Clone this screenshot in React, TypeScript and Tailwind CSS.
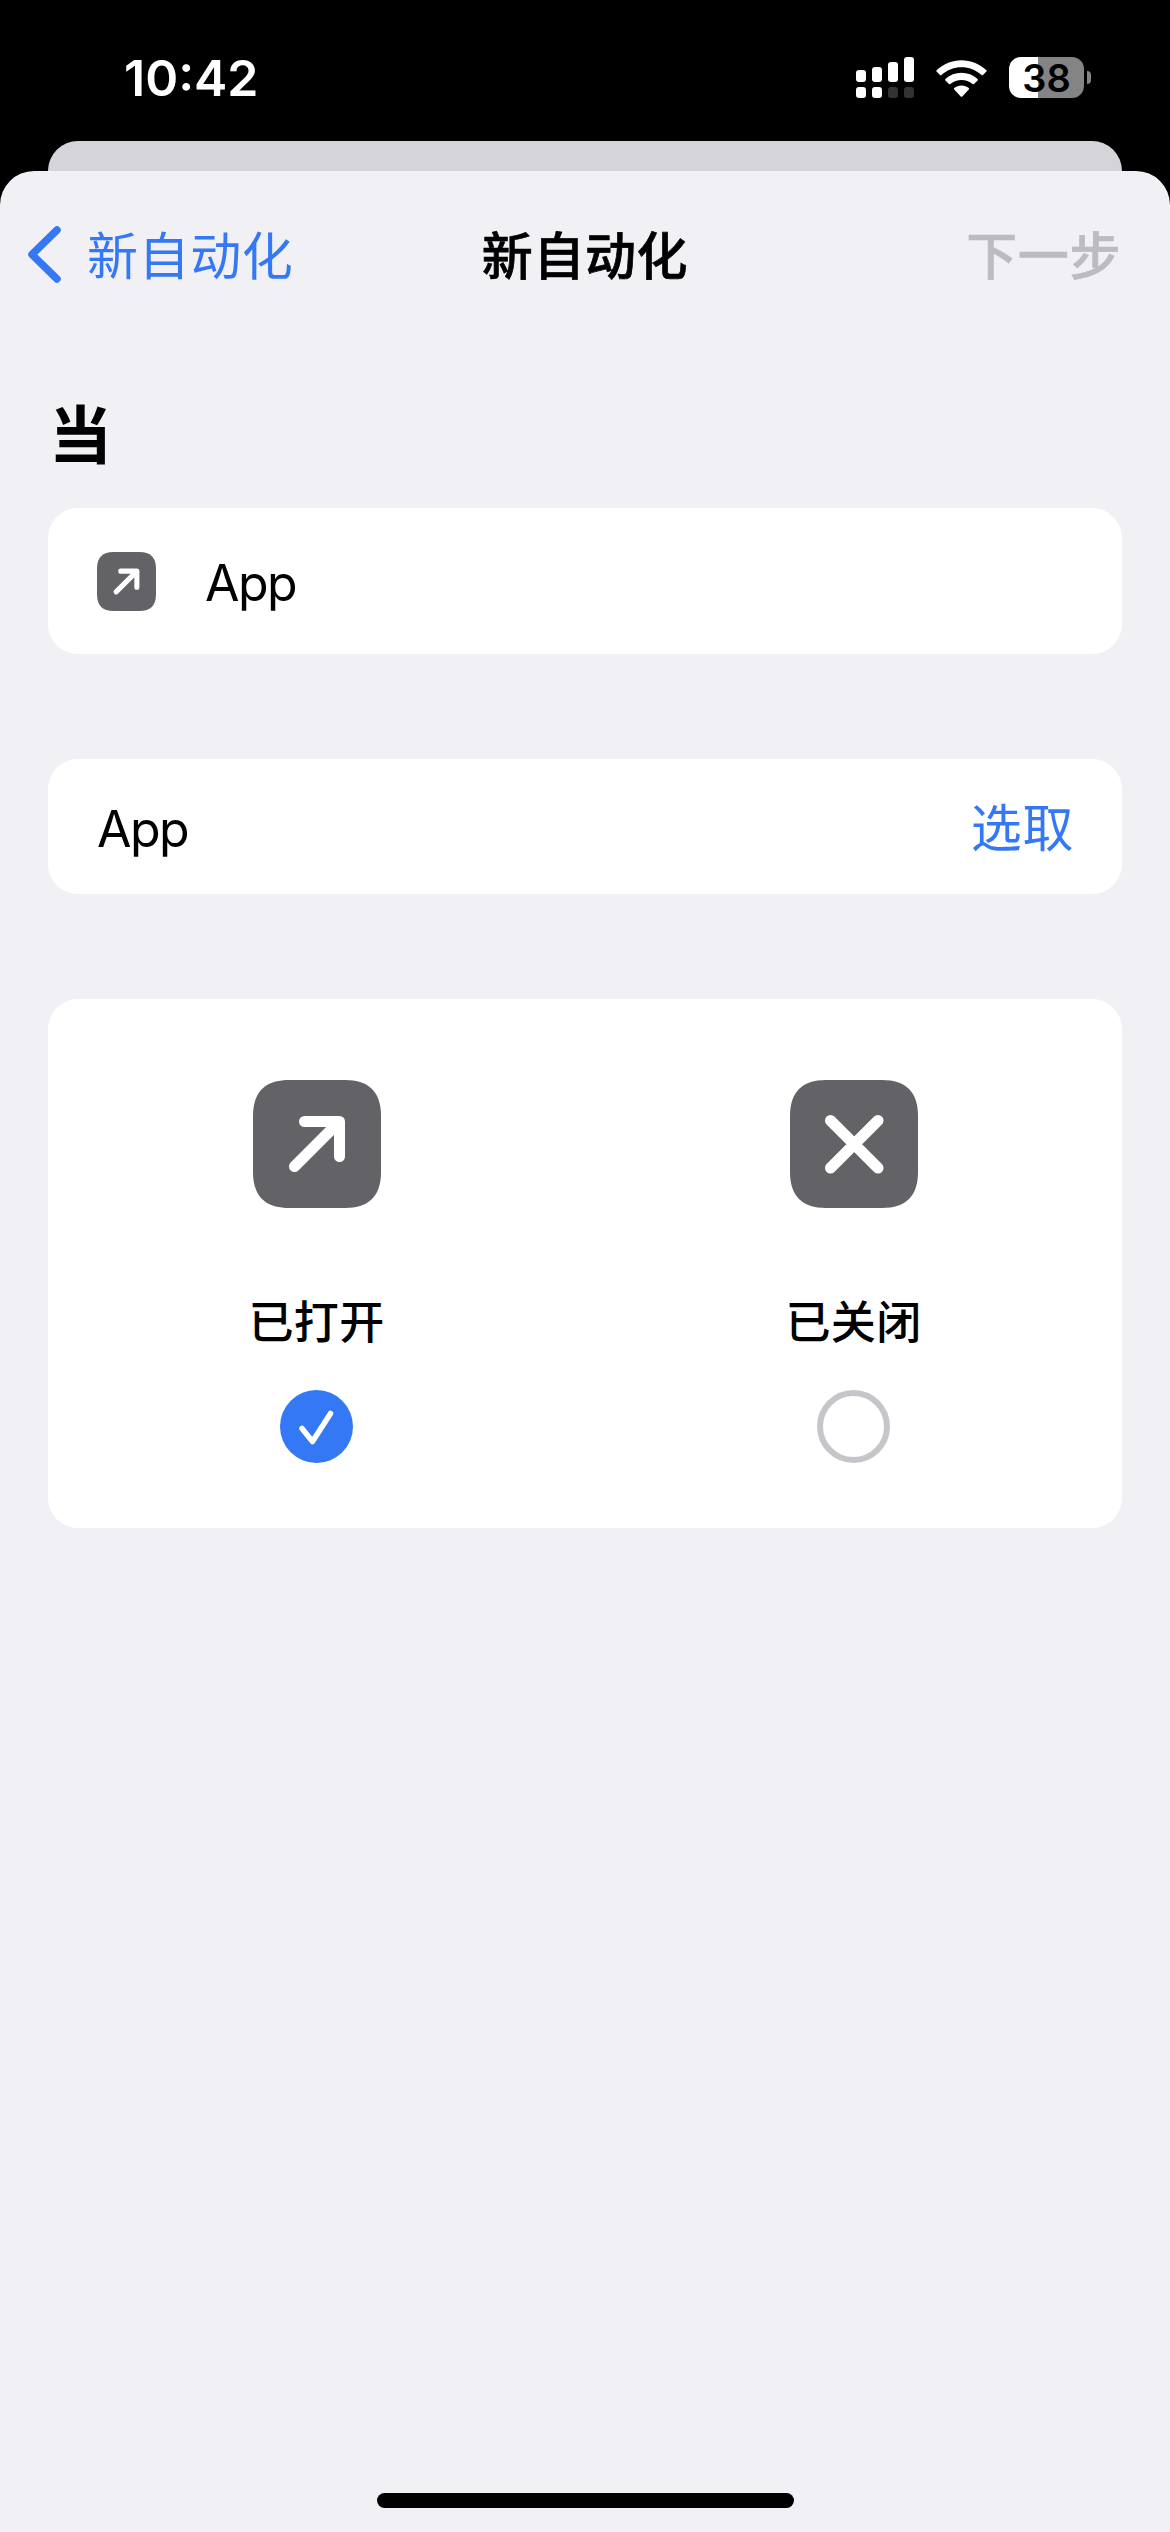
import { ReactNode } from "react";

const cjk = "font-[Inter,'Noto_Sans_CJK_SC',sans-serif]";

function Tile({ size, children }: { size: string; children: ReactNode }) {
  return (
    <svg viewBox="0 0 128 128" className={size}>
      <path
        d="M36 0H92C116 0 128 12 128 36V92C128 116 116 128 92 128H36C12 128 0 116 0 92V36C0 12 12 0 36 0Z"
        fill="#636267"
      />
      <g
        fill="none"
        stroke="#fff"
        strokeWidth="11"
        strokeLinecap="round"
        strokeLinejoin="round"
      >
        {children}
      </g>
    </svg>
  );
}

function OpenIcon({ size }: { size: string }) {
  return (
    <Tile size={size}>
      <path d="M41.5 86.5L86.5 41.5M51.5 41.5H86.5V76.5" />
    </Tile>
  );
}

function CloseIcon({ size }: { size: string }) {
  return (
    <Tile size={size}>
      <path d="M40.5 40.5L88 88M88 40.5L40.5 88" />
    </Tile>
  );
}

function Signal() {
  return (
    <svg viewBox="0 0 58 41" className="h-[41px] w-[58px]" fill="#fff">
      <rect x="0" y="13" width="10" height="12" rx="3" />
      <rect x="16" y="10" width="10" height="15" rx="3" />
      <rect x="32" y="5" width="10" height="20" rx="3" />
      <rect x="48" y="0" width="10" height="25" rx="3" />
      <rect x="0" y="30" width="10" height="11" rx="3" />
      <rect x="16" y="30" width="10" height="11" rx="3" />
      <rect x="32" y="30" width="10" height="11" rx="3" fill="#333" />
      <rect x="48" y="30" width="10" height="11" rx="3" fill="#333" />
    </svg>
  );
}

function Wifi() {
  return (
    <svg viewBox="0 0 51 38" className="h-[38px] w-[51px]" fill="#fff">
      <path d="M.6 10.2C14.5-3.2 36.5-3.2 50.4 10.2Q51.1 10.9 50.4 11.6L47 15Q46.3 15.6 45.6 15C34.2 4.6 16.8 4.6 5.4 15Q4.7 15.6 4 15L.6 11.6Q-.1 10.9.6 10.2Z" />
      <path d="M9.4 19.1C18.4 10.7 32.6 10.7 41.6 19.1Q42.3 19.8 41.6 20.5L38 24Q37.3 24.6 36.6 24C30.3 18.5 20.7 18.5 14.4 24Q13.7 24.6 13 24L9.4 20.5Q8.7 19.8 9.4 19.1Z" />
      <path d="M18.2 28C22.4 24.6 28.6 24.6 32.8 28Q33.6 28.7 32.8 29.5L26.3 36.4Q25.5 37.2 24.7 36.4L18.2 29.5Q17.4 28.7 18.2 28Z" />
    </svg>
  );
}

function Battery() {
  return (
    <div className="flex items-center gap-[3px]">
      <div className="flex h-[41px] w-[75px] items-center justify-center rounded-[12px] bg-linear-to-r from-white from-[29px] to-[#848484] to-[29px]">
        <span className="text-[38px] leading-none font-semibold text-black">
          38
        </span>
      </div>
      <div className="h-[13px] w-1 rounded-r-full bg-[#848484]" />
    </div>
  );
}

function StatusBar() {
  return (
    <div className="flex h-[141px] items-start justify-between pr-[79px] pl-[124px] text-white">
      <span className="mt-[48px] text-[50px] leading-[60px] font-semibold">
        10:42
      </span>
      <div className="mt-[57px] flex items-center">
        <Signal />
        <div className="w-[22px]" />
        <div className="pt-0.5">
          <Wifi />
        </div>
        <div className="w-[22px]" />
        <Battery />
      </div>
    </div>
  );
}

function NavBar() {
  return (
    <div className="grid h-[167px] grid-cols-3 items-center px-[28px] text-[51px] leading-[60px] tracking-[0.6px]">
      <button className="flex items-center gap-[26px] text-[#3478f6]">
        <svg
          viewBox="0 0 33 57"
          className="h-[57px] w-[33px]"
          fill="none"
          stroke="currentColor"
          strokeWidth="7.5"
          strokeLinecap="round"
          strokeLinejoin="round"
        >
          <path d="M29 4L4 28.5L29 53" />
        </svg>
        <span className="pt-1">新自动化</span>
      </button>
      <h1 className="pt-1 text-center font-medium [-webkit-text-stroke:0.7px]">
        新自动化
      </h1>
      <button className="pt-1 pr-[21px] text-right font-medium text-[#bcbcc0] [-webkit-text-stroke:0.7px]">
        下一步
      </button>
    </div>
  );
}

function Option({
  icon,
  label,
  checked,
}: {
  icon: ReactNode;
  label: string;
  checked: boolean;
}) {
  return (
    <div className="flex flex-1 flex-col items-center pt-[81px]">
      {icon}
      <span className="mt-[85px] text-[45px] leading-[60px] font-medium tracking-[0.4px]">
        {label}
      </span>
      {checked ? (
        <div className="mt-[37px] flex size-[73px] items-center justify-center rounded-full bg-[#3478f6]">
          <svg
            viewBox="0 0 73 73"
            className="size-[73px]"
            fill="none"
            stroke="#fff"
            strokeWidth="5.5"
            strokeLinecap="round"
            strokeLinejoin="round"
          >
            <path d="M22 38.5L32.5 51.5L50.5 23.5" />
          </svg>
        </div>
      ) : (
        <div className="mt-[37px] size-[73px] rounded-full border-[6px] border-[#c6c5ca]" />
      )}
    </div>
  );
}

export default function App() {
  return (
    <div
      className={`${cjk} flex h-[2532px] w-[1170px] flex-col bg-black text-black`}
    >
      <StatusBar />
      {/* edge of the sheet underneath */}
      <div className="mx-[48px] h-[60px] rounded-t-[30px] bg-[#d5d4d9]" />
      <main className="z-10 -mt-[30px] flex flex-1 flex-col rounded-t-[34px] bg-[#f1f0f5] px-[48px]">
        <div className="-mx-[48px]">
          <NavBar />
        </div>

        <h2 className="mt-[55px] ml-px text-[63px] leading-[84px] font-bold">
          当
        </h2>

        <div className="mt-[31px] flex h-[146px] items-center rounded-[30px] bg-white pl-[49px]">
          <OpenIcon size="size-[59px]" />
          <span className="ml-[49px] pt-[3px] text-[50px] leading-[60px] tracking-[-1.5px]">
            App
          </span>
        </div>

        <div className="mt-[105px] flex h-[135px] items-center justify-between rounded-[30px] bg-white pr-[48px] pl-[49px] text-[50px] leading-[60px]">
          <span className="pt-1 tracking-[-1.5px]">App</span>
          <button className="pt-[5px] text-[51px] tracking-[0.6px] text-[#3478f6]">
            选取
          </button>
        </div>

        <div className="mt-[105px] flex h-[529px] rounded-[30px] bg-white">
          <Option
            icon={<OpenIcon size="size-[128px]" />}
            label="已打开"
            checked
          />
          <Option
            icon={<CloseIcon size="size-[128px]" />}
            label="已关闭"
            checked={false}
          />
        </div>

        <div className="mt-auto mb-[24px] h-[15px] w-[417px] self-center rounded-full bg-black" />
      </main>
    </div>
  );
}
